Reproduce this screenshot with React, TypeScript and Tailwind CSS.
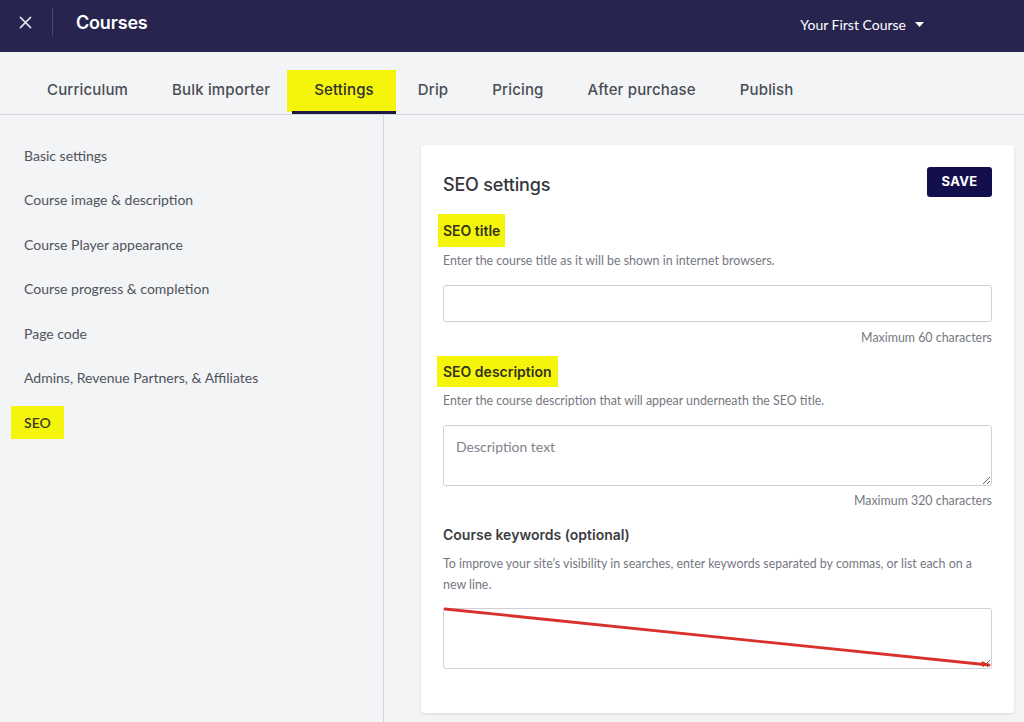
import React from 'react';

const tabs = ['Curriculum', 'Bulk importer', 'Settings', 'Drip', 'Pricing', 'After purchase', 'Publish'];

const sideItems = [
  'Basic settings',
  'Course image & description',
  'Course Player appearance',
  'Course progress & completion',
  'Page code',
  'Admins, Revenue Partners, & Affiliates',
  'SEO',
];

const inter = { fontFamily: 'Inter, "Noto Sans", sans-serif' };
const lato = { fontFamily: 'Lato, "Noto Sans", sans-serif' };

const App: React.FC = () => {
  return (
    <div className="h-[722px] overflow-hidden bg-[#f3f4f6] flex flex-col" style={inter}>
      {/* top bar */}
      <header className="h-[52px] pb-[8px] bg-[#27254f] flex items-center text-white shrink-0">
        <div className="w-[50px] flex items-center justify-center">
          <svg width="13" height="13" viewBox="0 0 14 14" className="text-gray-200">
            <path d="M1.5 1.5l11 11M12.5 1.5l-11 11" stroke="currentColor" strokeWidth="1.6" strokeLinecap="round" />
          </svg>
        </div>
        <div className="ml-[2px] w-px h-[28px] bg-[#4a4870]" />
        <h1 className="ml-[23px] text-[18px] font-semibold tracking-[-0.01em]">Courses</h1>
        <div className="ml-auto mr-[100px] flex items-center gap-[9px] text-[14px] pt-[4px]" style={lato}>
          <span>Your First Course</span>
          <svg width="9" height="5" viewBox="0 0 9 5"><path d="M0 0h9L4.5 5z" fill="white" /></svg>
        </div>
      </header>

      {/* tabs */}
      <nav className="h-[63px] border-b border-[#d4d6da] flex items-end pl-[25px] shrink-0">
        {tabs.map((t) => {
          const active = t === 'Settings';
          return (
            <div key={t} className="relative h-full flex items-end">
              {active && <div className="absolute left-[-5px] right-0 top-[18px] bottom-[2px] bg-[#f5f50c]" />}
              <div
                className={
                  'relative px-[22px] pb-[10px] text-[15px] font-medium tracking-[0.01em] ' +
                  (active ? 'border-b-[3px] border-[#1c1a48] text-[#2e2f33]' : 'border-b-[3px] border-transparent text-[#4a4d55]')
                }
              >
                {t}
              </div>
            </div>
          );
        })}
      </nav>

      <div className="flex flex-1 min-h-0">
        {/* sidebar */}
        <aside className="w-[384px] border-r border-[#d4d6da] pt-[18px] shrink-0" style={lato}>
          <ul className="flex flex-col">
            {sideItems.map((s) => (
              <li key={s} className="h-[44.5px] flex items-center pl-[11px]">
                {s === 'SEO' ? (
                  <span className="bg-[#f5f50c] px-[13px] py-[8px] leading-[17px] text-[14px] font-semibold text-[#3b3d22]">{s}</span>
                ) : (
                  <span className="pl-[13px] text-[14px] text-[#4f535b]">{s}</span>
                )}
              </li>
            ))}
          </ul>
        </aside>

        {/* content */}
        <main className="flex-1 pl-[37px] pr-[10px] pt-[30px]">
          <section className="bg-white rounded-[4px] shadow-[0_1px_3px_rgba(0,0,0,0.12)] px-[22px] pt-[22px] pb-[44px]">
            <div className="flex items-start justify-between">
              <h2 className="mt-[4px] text-[18px] font-medium text-[#34363c] tracking-[-0.01em]">SEO settings</h2>
              <button className="h-[30px] w-[65px] rounded-[3px] bg-[#130f4c] text-white text-[13px] font-bold tracking-wide">SAVE</button>
            </div>

            <div className="mt-[16px]">
              <span className="inline-block -ml-[5px] bg-[#f5f50c] px-[5px] py-[8px] text-[14px] font-semibold text-[#33341c] leading-[17px]">SEO title</span>
            </div>
            <p className="mt-[5px] text-[12.4px] text-[#75787f]" style={lato}>
              Enter the course title as it will be shown in internet browsers.
            </p>
            <input className="mt-[14px] block w-full h-[37px] border border-[#cfd1d5] rounded-[3px] outline-none" />
            <p className="mt-[7px] text-right text-[12.4px] text-[#75787f]" style={lato}>
              Maximum 60 characters
            </p>

            <div className="mt-[9px]">
              <span className="inline-block -ml-[6px] bg-[#f5f50c] px-[6px] py-[7px] text-[14px] font-semibold text-[#33341c] leading-[17px]">SEO description</span>
            </div>
            <p className="mt-[5px] text-[12.4px] text-[#75787f]" style={lato}>
              Enter the course description that will appear underneath the SEO title.
            </p>
            <textarea
              placeholder="Description text"
              className="mt-[14px] block w-full h-[61px] border border-[#cfd1d5] rounded-[3px] outline-none px-[12px] py-[10px] text-[14px] placeholder:text-[#80838a]"
              style={lato}
            />
            <p className="mt-[6px] text-right text-[12.4px] text-[#75787f]" style={lato}>
              Maximum 320 characters
            </p>

            <h3 className="mt-[14px] text-[14px] font-semibold text-[#3b3d42]">Course keywords (optional)</h3>
            <p className="mt-[8px] text-[12.4px] leading-[21px] text-[#75787f]" style={lato}>
              To improve your site’s visibility in searches, enter keywords separated by commas, or list each on a new line.
            </p>
            <div className="relative mt-[13px]">
              <textarea className="block w-full h-[61px] border border-[#cfd1d5] rounded-[3px] outline-none" />
              <svg className="absolute inset-0 w-full h-full pointer-events-none overflow-visible" viewBox="0 0 549 61" preserveAspectRatio="none">
                <line x1="2" y1="1" x2="546" y2="57" stroke="#d9302c" strokeWidth="2.8" strokeLinecap="round" />
                <path d="M539 53l8 4-9 1z" fill="#d9302c" />
              </svg>
            </div>
          </section>
        </main>
      </div>
    </div>
  );
};

export default App;
